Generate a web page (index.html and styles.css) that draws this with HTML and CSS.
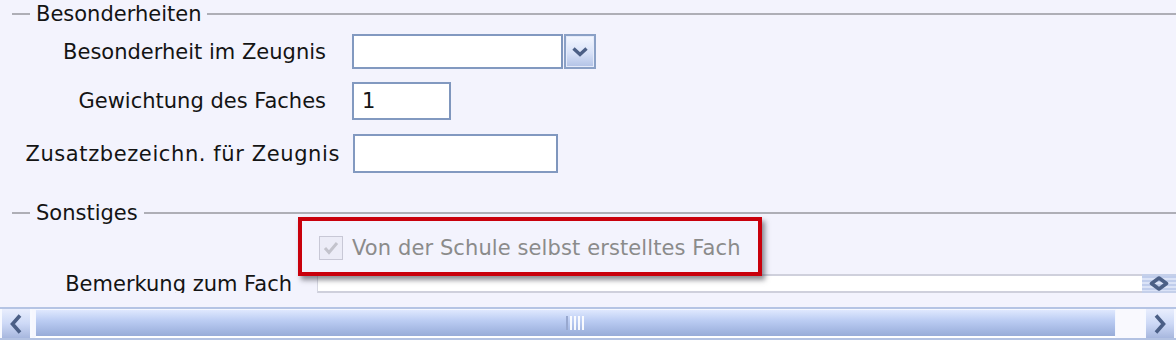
FILE: index.html
```html
<!DOCTYPE html>
<html lang="de">
<head>
<meta charset="utf-8">
<title>Fach</title>
<link rel="stylesheet" href="styles.css">
</head>
<body>
<div class="pane">
  <div class="viewport">
    <div class="group-title">
      <span class="rule-lead"></span><span class="group-name">Besonderheiten</span><span class="rule-tail"></span>
    </div>

    <div class="row row-combo">
      <span class="lbl lbl-a">Besonderheit im Zeugnis</span>
      <div class="combo">
        <div class="input combo-input"></div>
        <div class="combo-btn">
          <svg width="16" height="10" viewBox="0 0 16 10"><path d="M1.5 1.5 L8 7.5 L14.5 1.5" fill="none" stroke="#4b5f86" stroke-width="3.4"/></svg>
        </div>
      </div>
    </div>

    <div class="row row-weight">
      <span class="lbl lbl-a">Gewichtung des Faches</span>
      <div class="input input-short">1</div>
    </div>

    <div class="row row-extra">
      <span class="lbl lbl-b">Zusatzbezeichn. für Zeugnis</span>
      <div class="input input-mid"></div>
    </div>

    <div class="group-title group-two">
      <span class="rule-lead"></span><span class="group-name">Sonstiges</span><span class="rule-tail"></span>
    </div>

    <div class="row row-check">
      <span class="chk">
        <svg width="24" height="24" viewBox="0 0 24 24"><rect x="0.5" y="0.5" width="23" height="23" fill="#ececf7" stroke="#c8c8d6"/><path d="M6 12 L10 16.5 L18 7" fill="none" stroke="#c3c3cc" stroke-width="3"/></svg>
      </span>
      <span class="chk-text">Von der Schule selbst erstelltes Fach</span>
      <div class="highlight"></div>
    </div>

    <div class="row row-note">
      <span class="lbl lbl-c">Bemerkung zum Fach</span>
      <div class="note">
        <div class="note-input"></div>
        <div class="note-btn">
          <svg width="22" height="15" viewBox="0 0 22 15"><path d="M11 2 L18.5 7.5 L11 13 L3.5 7.5 Z" fill="none" stroke="#4b5f86" stroke-width="3.6" stroke-linejoin="round"/></svg>
        </div>
      </div>
    </div>
  </div>

  <div class="hscroll">
    <div class="sb-btn">
      <svg width="12" height="20" viewBox="0 0 12 20"><path d="M10 1.5 L2.5 10 L10 18.5" fill="none" stroke="#4b5f86" stroke-width="3.6"/></svg>
    </div>
    <div class="sb-track">
      <div class="sb-thumb">
        <div class="grip"><span></span><span></span><span></span><span></span></div>
      </div>
      <div class="sb-gap"></div>
    </div>
    <div class="sb-btn">
      <svg width="12" height="20" viewBox="0 0 12 20"><path d="M2 1.5 L9.5 10 L2 18.5" fill="none" stroke="#4b5f86" stroke-width="3.6"/></svg>
    </div>
  </div>
</div>
</body>
</html>
```

FILE: styles.css
```css
html, body {
  margin: 0;
  padding: 0;
}

body {
  width: 1176px;
  height: 340px;
  overflow: hidden;
  background: #f3f3fd;
  font-family: "DejaVu Sans", sans-serif;
  font-size: 21px;
  color: #141414;
}

.pane {
  display: flex;
  flex-direction: column;
  height: 340px;
}

.viewport {
  height: 293px;
  overflow: hidden;
  display: flex;
  flex-direction: column;
}

/* titled border */
.group-title {
  display: flex;
  align-items: center;
  height: 28px;
  padding-left: 12px;
  flex: none;
}

.group-two {
  margin-top: 26px;
}

.rule-lead {
  width: 18px;
  height: 0;
  border-top: 2px solid #aeaeb6;
}

.rule-tail {
  flex: 1;
  height: 0;
  border-top: 2px solid #aeaeb6;
}

.group-name {
  padding: 0 6px;
  line-height: 28px;
}

/* rows */
.row {
  display: flex;
  align-items: center;
  flex: none;
}

.lbl {
  text-align: right;
  white-space: nowrap;
}

.lbl-a {
  width: 326px;
  margin-right: 26px;
}

.lbl-b {
  width: 340px;
  margin-right: 13px;
  letter-spacing: 0.6px;
}

.lbl-c {
  width: 292px;
  margin-right: 25px;
}

.row-combo {
  margin-top: 6px;
  height: 35px;
}

.row-weight {
  margin-top: 13px;
  height: 38px;
}

.row-extra {
  margin-top: 14px;
  height: 39px;
}

.input {
  box-sizing: border-box;
  height: 100%;
  background: #ffffff;
  border: 2px solid #8299c0;
  border-right-color: #7f96bd;
  padding-left: 8px;
  display: flex;
  align-items: center;
}

.combo {
  display: flex;
  height: 35px;
}

.combo-input {
  width: 211px;
}

.combo-btn {
  box-sizing: border-box;
  width: 32px;
  height: 35px;
  margin-left: 1px;
  border: 2px solid #8aa0c6;
  box-shadow: inset 0 0 0 1px #e4eafa;
  background: linear-gradient(#f4f7ff, #d7e1f8 55%, #b2c2e6);
  display: flex;
  align-items: center;
  justify-content: center;
}

.input-short {
  width: 99px;
}

.input-mid {
  width: 205px;
}

/* checkbox row */
.row-check {
  position: relative;
  margin-top: 8px;
  height: 26px;
  padding-left: 319px;
}

.chk {
  display: flex;
  width: 24px;
  height: 24px;
}

.chk-text {
  margin-left: 9px;
  color: #8b8b8b;
  letter-spacing: 0.1px;
}

.highlight {
  position: absolute;
  left: 298px;
  top: -18px;
  width: 464px;
  height: 59px;
  box-sizing: border-box;
  border: 4px solid #c9000c;
  box-shadow: 3px 4px 5px rgba(50, 50, 60, 0.55);
}

/* note row */
.row-note {
  margin-top: 13px;
  height: 19px;
}

.note {
  flex: 1;
  display: flex;
  height: 19px;
}

.note-input {
  flex: 1;
  box-sizing: border-box;
  background: #ffffff;
  border-top: 2px solid #cfd0dc;
  border-bottom: 2px solid #cfd0dc;
  border-left: 1px solid #d6d7e2;
}

.note-btn {
  width: 34px;
  box-sizing: border-box;
  border-top: 2px solid #c5d0ea;
  border-bottom: 2px solid #c5d0ea;
  background: repeating-linear-gradient(#c0cdec 0 2px, #dbe3f7 2px 4px);
  display: flex;
  align-items: center;
  justify-content: center;
  overflow: hidden;
}

/* horizontal scrollbar */
.hscroll {
  margin-top: 14px;
  height: 33px;
  box-sizing: border-box;
  display: flex;
  border-top: 2px solid #b5c4e4;
  border-bottom: 2px solid #b3c2e2;
  background: #f6f7fe;
}

.sb-btn {
  width: 32px;
  flex: none;
  box-sizing: border-box;
  border-left: 2px solid #f7f9ff;
  border-right: 2px solid #f7f9ff;
  background: linear-gradient(#e9eefd, #cdd9f6 50%, #a7b7de);
  display: flex;
  align-items: center;
  justify-content: center;
}

.sb-track {
  flex: 1;
  display: flex;
  padding-left: 3px;
}

.sb-thumb {
  width: 1081px;
  box-sizing: border-box;
  border: 1px solid #f4f7ff;
  border-bottom: 2px solid #ffffff;
  background: linear-gradient(#dfe8fe, #bccdf3 40%, #a9bce6 70%, #98acd8);
  display: flex;
  align-items: center;
  justify-content: center;
}

.sb-gap {
  flex: 1;
  background: #f9f9fe;
}

.grip {
  display: flex;
  gap: 2px;
  height: 14px;
  padding-left: 2px;
  box-shadow: -2px 0 0 #98a8cf;
}

.grip span {
  width: 2px;
  height: 14px;
  background: #ffffff;
  opacity: 0.9;
}
```
